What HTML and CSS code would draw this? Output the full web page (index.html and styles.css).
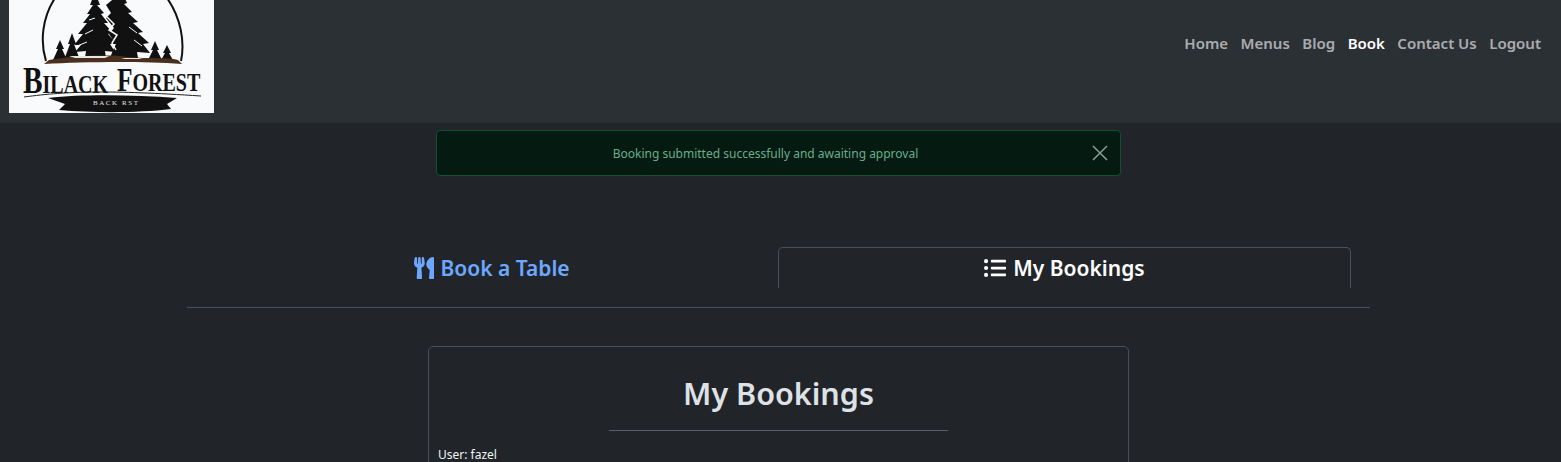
FILE: index.html
```html
<!DOCTYPE html>
<html lang="en">
<head>
<meta charset="utf-8">
<title>My Bookings</title>
<link rel="stylesheet" href="styles.css">
</head>
<body>
<nav class="navbar">
  <svg class="logo" viewBox="0 0 205 113" role="img" aria-label="Black Forest logo">
    <rect width="205" height="113" fill="#f8fafc"/>
    <path class="arc" d="M37 61C31 42 33 18 46 -2M158 -2C172 18 176 42 172 61"/>
    <g fill="#111">
      <path d="M86 -8L91 5L88 5L95 13L92 14L99 23L95 23L104 33L99 34L108 44L101 44L106 52L96 51L97 58H76L77 51L66 52L72 45L65 45L74 34L69 34L78 23L74 23L81 14L78 14L84 5L81 5Z"/>
      <path d="M113 -8L118 3L115 4L123 12L119 13L129 22L124 23L134 32L129 33L140 43L134 44L141 53L128 52L129 58H101L104 50L107 44L100 34L105 28L97 18L102 13L97 5Z"/>
      <path d="M51 40L55 49H53L58 60H44L49 49H47ZM63 33L67 44H65L71 60H55L61 44H59ZM146 41L150 50H148L153 60H139L144 50H142ZM158 45L162 53H160L165 62H151L156 53H154Z"/>
    </g>
    <path class="snow" d="M97 16L105 24L100 30L108 35L103 43L107 50"/>
    <path class="snow-thin" d="M76 34L84 30M68 46L78 42M120 27L128 33M125 40L133 46M80 20L86 18"/>
    <path d="M40 60C62 56 100 54 118 57C140 59 158 57 169 60L173 64C130 61 75 62 35 64Z" fill="#4a2e1e"/>
    <path d="M60 56H100L96 58H66ZM112 58H134L130 59H116Z" fill="#e9e6df"/>
    <g transform="translate(14 93) scale(.77 1)"><text class="logo-text"><tspan class="logo-cap">B</tspan>ILACK</text></g>
    <g transform="translate(108 91) scale(.77 1)"><text class="logo-text"><tspan class="logo-cap-f">F</tspan>OREST</text></g>
    <path class="rule" d="M15 97C60 91 100 90 192 96"/>
    <path d="M39 98C75 94 125 95 168 98L158 104L162 109C130 113 85 113 50 110L56 104Z" fill="#111"/>
    <text class="logo-sub" x="84" y="105" textLength="45">BACK RST</text>
  </svg>
  <ul class="nav-links">
    <li><a href="#">Home</a></li>
    <li><a href="#">Menus</a></li>
    <li><a href="#">Blog</a></li>
    <li><a href="#" class="active">Book</a></li>
    <li><a href="#">Contact Us</a></li>
    <li><a href="#">Logout</a></li>
  </ul>
</nav>
<main>
  <div class="alert">
    <span>Booking submitted successfully and awaiting approval</span>
    <svg class="close" viewBox="0 0 16 16" aria-label="Close"><path d="M1 1L15 15M15 1L1 15"/></svg>
  </div>
  <div class="tabs">
    <a href="#" class="tab tab-link">
      <svg class="tab-icon utensils" viewBox="0 0 416 512" preserveAspectRatio="none"><path d="M207.9 15.2c.8 4.7 16.1 94.5 16.1 128.8 0 52.3-27.8 89.6-68.9 104.6L168 486.7c.7 13.7-10.2 25.3-24 25.3H80c-13.7 0-24.7-11.5-24-25.3l12.9-238.1C27.7 233.6 0 196.2 0 144 0 109.6 15.3 19.9 16.1 15.2 19.3-5.1 61.4-5.4 64 16.3v141.2c1.3 3.4 15.1 3.2 16 0 1.4-25.3 7.9-139.2 8-141.8 3.3-20.8 44.7-20.8 47.9 0 .2 2.7 6.6 116.5 8 141.8.9 3.2 14.8 3.4 16 0V16.3c2.6-21.6 44.8-21.4 48-1.1zm119.2 285.7l-15 185.1c-1.2 14 9.9 26 23.9 26h56c13.3 0 24-10.7 24-24V24c0-13.2-10.7-24-24-24-82.5 0-221.4 178.5-64.9 300.9z"/></svg>
      <span>Book a Table</span>
    </a>
    <a href="#" class="tab tab-current">
      <svg class="tab-icon list" viewBox="0 0 512 512"><path d="M48 48a48 48 0 1 0 48 48 48 48 0 0 0-48-48zm0 160a48 48 0 1 0 48 48 48 48 0 0 0-48-48zm0 160a48 48 0 1 0 48 48 48 48 0 0 0-48-48zm448 16H176a16 16 0 0 0-16 16v32a16 16 0 0 0 16 16h320a16 16 0 0 0 16-16v-32a16 16 0 0 0-16-16zm0-320H176a16 16 0 0 0-16 16v32a16 16 0 0 0 16 16h320a16 16 0 0 0 16-16V80a16 16 0 0 0-16-16zm0 160H176a16 16 0 0 0-16 16v32a16 16 0 0 0 16 16h320a16 16 0 0 0 16-16v-32a16 16 0 0 0-16-16z"/></svg>
      <span>My Bookings</span>
    </a>
  </div>
  <section class="card">
    <h1>My Bookings</h1>
    <hr class="card-rule">
    <p class="user">User: fazel</p>
  </section>
</main>
</body>
</html>
```
FILE: styles.css
```css
* { box-sizing: border-box; }
html, body { margin: 0; height: 462px; overflow: hidden; }
body {
  background: #212529;
  color: #dee2e6;
  font-family: "Noto Sans", "Open Sans", sans-serif;
}
.navbar {
  height: 123px;
  background: #2b3035;
  display: flex;
  align-items: flex-start;
  justify-content: space-between;
  padding: 0 20px 0 9px;
}
.logo { width: 205px; height: 113px; display: block; }
.arc { fill: none; stroke: #111; stroke-width: 2; }
.snow { fill: none; stroke: #f8fafc; stroke-width: 1.5; }
.snow-thin { fill: none; stroke: #f8fafc; stroke-width: 1; }
.rule { fill: none; stroke: #222; stroke-width: 1; }
.logo-text { font-family: "Liberation Serif", serif; font-weight: 700; font-size: 26px; fill: #111; }
.logo-cap { font-size: 38px; }
.logo-cap-f { font-size: 33px; }
.logo-sub { font-family: "Liberation Serif", serif; font-size: 7px; fill: #e8e8e8; }
.nav-links {
  list-style: none;
  margin: 0;
  padding: 0;
  height: 85px;
  display: flex;
  align-items: center;
  gap: 12.5px;
  font-size: 15px;
  font-weight: 600;
}
.nav-links a { color: rgba(255, 255, 255, .62); text-decoration: none; }
.nav-links a.active { color: #fff; }
main { display: flex; flex-direction: column; align-items: center; padding-right: 4px; }
.alert {
  width: 685px;
  height: 46px;
  margin-top: 7px;
  padding-right: 26px;
  background: #051b11;
  border: 1px solid #0f5132;
  border-radius: 4px;
  color: #69ad8c;
  font-size: 12px;
  display: flex;
  align-items: center;
  justify-content: center;
  position: relative;
}
.close {
  position: absolute;
  right: 12px;
  top: 14px;
  width: 16px;
  height: 16px;
  fill: none;
  stroke: #8b9a93;
  stroke-width: 1.5;
}
.tabs {
  width: 1183px;
  height: 61px;
  margin-top: 71px;
  padding: 0 19px;
  border-bottom: 1px solid #495057;
  display: grid;
  grid-template-columns: 1fr 573px;
  align-items: start;
}
.tab {
  height: 41px;
  padding-top: 1px;
  padding-bottom: 1px;
  display: flex;
  align-items: center;
  justify-content: center;
  gap: 7px;
  border: 1px solid transparent;
  border-bottom: 0;
  font-size: 21px;
  font-weight: 600;
  text-decoration: none;
}
.tab-link { color: #6ea8fe; gap: 6px; }
.tab-current {
  color: #fff;
  border-color: #495057;
  border-radius: 5px 5px 0 0;
}
.tab-icon { fill: currentColor; display: block; }
.utensils { width: 20px; height: 22px; }
.list { width: 22px; height: 22px; }
.card {
  width: 701px;
  height: 200px;
  margin-top: 38px;
  border: 1px solid #495057;
  border-radius: 5px;
  padding: 0 9px;
}
.card h1 {
  margin: 24px 0 0;
  text-align: center;
  font-size: 30.5px;
  line-height: 44px;
  font-weight: 600;
}
.card-rule {
  width: 339px;
  height: 1px;
  margin: 15px auto 0;
  border: 0;
  background: #5b6066;
}
.user { margin: 16px 0 0; font-size: 12px; line-height: 16px; color: #f1f3f5; }
```
